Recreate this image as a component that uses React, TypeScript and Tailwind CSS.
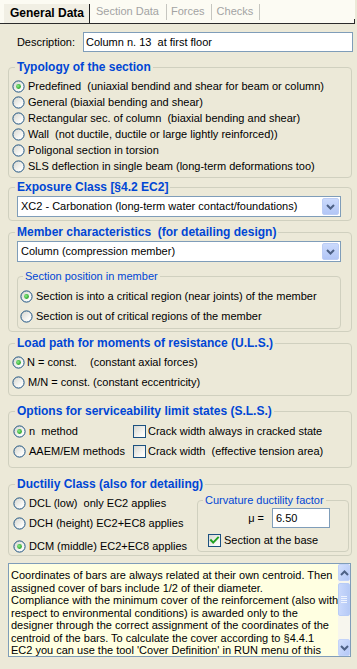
import React from "react";

function Radio({ checked = false }: { checked?: boolean }) {
  return (
    <svg width="13" height="13" viewBox="0 0 13 13" className="block shrink-0">
      <defs>
        <linearGradient id="radioFill" x1="0" y1="0" x2="1" y2="1">
          <stop offset="0" stopColor="#d4d4cc" />
          <stop offset="0.7" stopColor="#fafaf8" />
          <stop offset="1" stopColor="#ffffff" />
        </linearGradient>
        <radialGradient id="radioDot" cx="0.4" cy="0.4" r="0.65">
          <stop offset="0" stopColor="#8ef08a" />
          <stop offset="1" stopColor="#1e9a1e" />
        </radialGradient>
      </defs>
      <circle cx="6.5" cy="6.5" r="5.6" fill="url(#radioFill)" stroke="#1c5180" strokeWidth="1" />
      {checked && <circle cx="6.5" cy="6.5" r="2.4" fill="url(#radioDot)" />}
    </svg>
  );
}

function Check({ checked = false }: { checked?: boolean }) {
  return (
    <svg width="13" height="13" viewBox="0 0 13 13" className="block shrink-0">
      <defs>
        <linearGradient id="cbFill" x1="0" y1="0" x2="1" y2="1">
          <stop offset="0" stopColor="#d6d6ce" />
          <stop offset="0.7" stopColor="#f8f8f6" />
          <stop offset="1" stopColor="#ffffff" />
        </linearGradient>
      </defs>
      <rect x="0.5" y="0.5" width="12" height="12" fill="url(#cbFill)" stroke="#1c5180" strokeWidth="1" />
      {checked && (
        <path d="M3 6.2 L5.2 8.6 L10 3.6" stroke="#21a121" strokeWidth="2" fill="none" strokeLinecap="square" />
      )}
    </svg>
  );
}

function Chevron({ up = false }: { up?: boolean }) {
  return (
    <svg width="9" height="6" viewBox="0 0 9 6" className="block">
      <path
        d={up ? "M1 5 L4.5 1.5 L8 5" : "M1 1 L4.5 4.5 L8 1"}
        stroke="#4d6185"
        strokeWidth="2"
        fill="none"
      />
    </svg>
  );
}

function Combo({ text }: { text: string }) {
  return (
    <div className="ml-[8px] flex h-[21px] w-[324px] items-center border border-[#7f9db9] bg-white">
      <span className="flex-1 pl-[3px] whitespace-pre">{text}</span>
      <div className="mr-[1px] flex h-[17px] w-[17px] items-center justify-center rounded-[2px] border border-[#bccdf5] bg-gradient-to-b from-[#cbdafc] to-[#b2c6f6]">
        <Chevron />
      </div>
    </div>
  );
}

function Legend({ children, bold = true, ml = "ml-[6px]" }: { children: React.ReactNode; bold?: boolean; ml?: string }) {
  return (
    <legend className={`${ml} px-[2px] leading-[14px] text-[#0046d5] whitespace-pre ${bold ? "font-bold text-[12px]" : "text-[11px]"}`}>
      {children}
    </legend>
  );
}

function RadioRow({ checked, children, h = "h-[16px]" }: { checked?: boolean; children: React.ReactNode; h?: string }) {
  return (
    <div className={`flex ${h} items-center`}>
      <Radio checked={checked} />
      <span className="ml-[3px] whitespace-pre">{children}</span>
    </div>
  );
}

export default function App() {
  return (
    <div className="h-[669px] w-[357px] overflow-hidden bg-[#ece9d8] font-['Liberation_Sans',Arial,sans-serif] text-[11px] leading-[13px] text-black">
      {/* Tabs */}
      <div className="flex h-[24px] w-[355px] border-b border-[#2b2b2b] bg-[#fcfbf3]">
        <div className="ml-[4px] mt-[4px] flex w-[86px] items-center border-r border-[#222] bg-[#f1efe4] pl-[6px] text-[12px] font-bold">
          General Data
        </div>
        <div className="flex items-center pl-[6px] text-[#a3a3a3]">Section Data</div>
        <div className="ml-[7px] mt-[4px] h-[16px] border-l border-[#c6c6c0]" />
        <div className="flex items-center pl-[4px] text-[#a3a3a3]">Forces</div>
        <div className="ml-[6px] mt-[4px] h-[16px] border-l border-[#c6c6c0]" />
        <div className="flex items-center pl-[5px] text-[#a3a3a3]">Checks</div>
        <div className="ml-[6px] mt-[4px] h-[16px] border-l border-[#c6c6c0]" />
        <div className="ml-auto mt-[19px] h-[4px] border-r border-[#2b2b2b]" />
      </div>

      {/* Description */}
      <div className="mt-[8px] flex h-[20px] items-center">
        <span className="w-[75px] text-right">Description:</span>
        <div className="ml-[8px] flex h-[20px] w-[270px] items-center border border-[#7f9db9] bg-white pl-[2px] whitespace-pre">
          Column n. 13  at first floor
        </div>
      </div>

      <div className="ml-[8px] w-[344px]">
        {/* Typology */}
        <fieldset className="mt-[8px] rounded-[4px] border border-[#d0d0bf]">
          <Legend>Typology of the section</Legend>
          <div className="pl-[3px] pt-[4px] pb-[3px]">
            <RadioRow checked>Predefined  (uniaxial bendind and shear for beam or column)</RadioRow>
            <RadioRow>General (biaxial bending and shear)</RadioRow>
            <RadioRow>Rectangular sec. of column  (biaxial bending and shear)</RadioRow>
            <RadioRow>Wall  (not ductile, ductile or large lightly reinforced))</RadioRow>
            <RadioRow>Poligonal section in torsion</RadioRow>
            <RadioRow>SLS deflection in single beam (long-term deformations too)</RadioRow>
          </div>
        </fieldset>

        {/* Exposure */}
        <fieldset className="mt-[2px] rounded-[4px] border border-[#d0d0bf]">
          <Legend>Exposure Class [§4.2 EC2]</Legend>
          <div className="pt-[2px] pb-[3px]">
            <Combo text="XC2 - Carbonation (long-term water contact/foundations)" />
          </div>
        </fieldset>

        {/* Member */}
        <fieldset className="mt-[4px] rounded-[4px] border border-[#d0d0bf]">
          <Legend>Member characteristics  (for detailing design)</Legend>
          <div className="pt-[2px] pb-[2px]">
            <Combo text="Column (compression member)" />
            <fieldset className="ml-[8px] mt-[7px] w-[324px] rounded-[4px] border border-[#d0d0bf]">
              <Legend bold={false} ml="ml-[5px]">Section position in member</Legend>
              <div className="pl-[2px] pt-[3px] pb-[2px]">
                <RadioRow checked h="h-[20px]">Section is into a critical region (near joints) of the member</RadioRow>
                <RadioRow h="h-[20px]">Section is out of critical regions of the member</RadioRow>
              </div>
            </fieldset>
          </div>
        </fieldset>

        {/* Load path */}
        <fieldset className="mt-[4px] rounded-[4px] border border-[#d0d0bf]">
          <Legend>Load path for moments of resistance (U.L.S.)</Legend>
          <div className="pl-[3px] pt-[2px] pb-[3px]">
            <div className="flex h-[20px] items-center">
              <Radio checked />
              <span className="ml-[2px] w-[63px]">N = const.</span>
              <span>(constant axial forces)</span>
            </div>
            <RadioRow h="h-[20px]">M/N = const. (constant eccentricity)</RadioRow>
          </div>
        </fieldset>

        {/* SLS options */}
        <fieldset className="mt-[8px] rounded-[4px] border border-[#d0d0bf]">
          <Legend>Options for serviceability limit states (S.L.S.)</Legend>
          <div className="grid grid-cols-[124px_1fr] pl-[0px] pt-[3px] pb-[6px]">
            <div className="pl-[4px]">
              <RadioRow checked h="h-[20px]">n  method</RadioRow>
              <RadioRow h="h-[20px]">AAEM/EM methods</RadioRow>
            </div>
            <div>
              <div className="flex h-[20px] items-center">
                <Check />
                <span className="ml-[2px]">Crack width always in cracked state</span>
              </div>
              <div className="flex h-[20px] items-center">
                <Check />
                <span className="ml-[2px] whitespace-pre">Crack width  (effective tension area)</span>
              </div>
            </div>
          </div>
        </fieldset>

        {/* Ductility */}
        <fieldset className="mt-[9px] rounded-[4px] border border-[#d0d0bf]">
          <Legend>Ductiliy Class (also for detailing)</Legend>
          <div className="flex items-start">
            <div className="w-[188px] pl-[4px] pt-[5px] pb-[2px]">
              <RadioRow h="h-[14px]">DCL (low)  only EC2 applies</RadioRow>
              <div className="mt-[6px]">
                <RadioRow h="h-[14px]">DCH (height) EC2+EC8 applies</RadioRow>
              </div>
              <div className="mt-[9px]">
                <RadioRow checked h="h-[14px]">DCM (middle) EC2+EC8 applies</RadioRow>
              </div>
            </div>
            <fieldset className="mt-[2px] w-[152px] rounded-[4px] border border-[#d0d0bf]">
              <Legend bold={false} ml="ml-[5px]">Curvature ductility factor</Legend>
              <div className="pt-[1px] pb-[4px]">
                <div className="flex items-center">
                  <span className="w-[66px] text-right">μ =</span>
                  <div className="ml-[8px] flex h-[20px] w-[58px] items-center border border-[#7f9db9] bg-white pl-[3px]">
                    6.50
                  </div>
                </div>
                <div className="mt-[6px] flex h-[13px] items-center pl-[10px]">
                  <Check checked />
                  <span className="ml-[3px]">Section at the base</span>
                </div>
              </div>
            </fieldset>
          </div>
        </fieldset>

        {/* Info text */}
        <div className="mt-[7px] flex h-[94px] w-[343px] border border-[#7f9db9] bg-[#ffffe1]">
          <div className="flex-1 pl-[2px] pt-[5px] leading-[12.5px] whitespace-pre">
            <div>Coordinates of bars are always related at their own centroid. Then</div>
            <div>assigned cover of bars include 1/2 of their diameter.</div>
            <div>Compliance with the minimum cover of the reinforcement (also with</div>
            <div>respect to environmental conditions) is awarded only to the</div>
            <div>designer through the correct assignment of the coordinates of the</div>
            <div>centroid of the bars. To calculate the cover according to §4.4.1</div>
            <div>EC2 you can use the tool 'Cover Definition' in RUN menu of this</div>
          </div>
          <div className="flex w-[17px] flex-col bg-[#f7f6ee]">
            <div className="flex h-[17px] items-center justify-center rounded-[2px] border border-[#c3d3f9] bg-gradient-to-br from-[#d3e0fd] to-[#b4c8f6]">
              <Chevron up />
            </div>
            <div className="flex-1 pt-[2px]">
              <div className="flex h-[33px] flex-col items-center justify-center gap-[1px] rounded-[2px] border border-[#b8ccf6] bg-gradient-to-r from-[#c9d8fc] to-[#b6caf6]">
                <div className="h-[1px] w-[6px] bg-[#eef3fe]" />
                <div className="h-[1px] w-[6px] bg-[#eef3fe]" />
                <div className="h-[1px] w-[6px] bg-[#eef3fe]" />
                <div className="h-[1px] w-[6px] bg-[#eef3fe]" />
              </div>
            </div>
            <div className="flex h-[17px] items-center justify-center rounded-[2px] border border-[#c3d3f9] bg-gradient-to-br from-[#d3e0fd] to-[#b4c8f6]">
              <Chevron />
            </div>
          </div>
        </div>
      </div>
    </div>
  );
}
